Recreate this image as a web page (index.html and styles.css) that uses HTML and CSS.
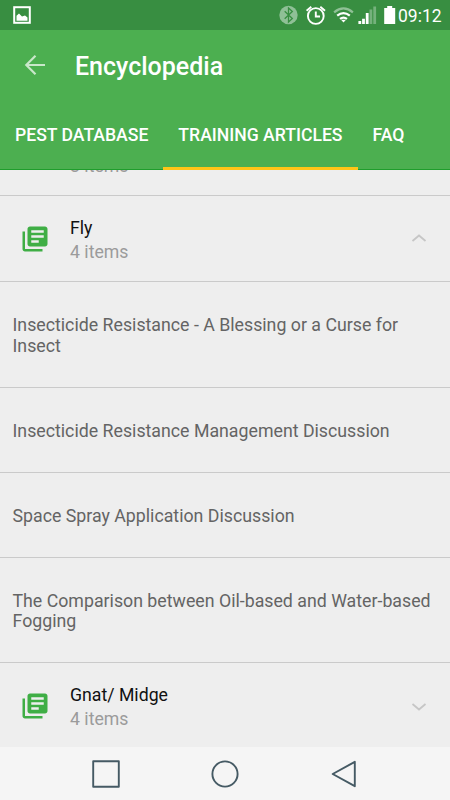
FILE: index.html
```
<!DOCTYPE html>
<html lang="en">
<head>
    <meta charset="UTF-8">
    <meta name="viewport" content="width=device-width, initial-scale=1.0">
    <title>Encyclopedia</title>
    <link rel="stylesheet" href="styles.css">
</head>
<body>
    <!-- Shared icons -->
    <svg width="0" height="0" class="sprite">
        <symbol id="icon-library" viewBox="0 0 24 24">
            <path d="M4 6H2v14c0 1.1.9 2 2 2h14v-2H4V6zm16-4H8c-1.1 0-2 .9-2 2v12c0 1.1.9 2 2 2h12c1.1 0 2-.9 2-2V4c0-1.1-.9-2-2-2zm-1 9H9V9h10v2zm-4 4H9v-2h6v2zm4-8H9V5h10v2z"/>
        </symbol>
        <symbol id="icon-up" viewBox="0 0 16 10">
            <path d="M1.5 7L8 1.5L14.5 7"/>
        </symbol>
        <symbol id="icon-down" viewBox="0 0 16 10">
            <path d="M1.5 3L8 8.5L14.5 3"/>
        </symbol>
    </svg>

    <div class="screen">
        <div class="status-bar">
            <svg class="picture" width="18" height="18" viewBox="0 0 18 18">
                <rect x="1.2" y="1.2" width="15.6" height="15.6" fill="none" stroke="#fff" stroke-width="2"/>
                <path d="M3.5 14.8V9.8L6 7.5L9 10.5L12 9.5L14.5 11.5V14.8z" fill="#fff"/>
            </svg>
            <div class="indicators">
                <svg width="165" height="30" viewBox="0 0 165 30">
                    <circle cx="10.5" cy="15" r="9.2" fill="#8fc096"/>
                    <path d="M6.7 11.3L14.3 18.6L10.5 22V8L14.3 11.4L6.7 18.7" fill="none" stroke="#388e41" stroke-width="1.3"/>
                    <g fill="none" stroke="#fff" stroke-width="1.9">
                        <circle cx="37.8" cy="16" r="7.9"/>
                        <path d="M37.8 11.5V16.5H42M28.6 10.8L33.3 6.8M42.3 6.8L47 10.8"/>
                    </g>
                    <g fill="none" stroke-width="2.2">
                        <path d="M56.1 12.3Q65.5 4.5 74.9 12.3" stroke="#8fc096"/>
                        <path d="M59.2 15.7Q65.5 10.5 71.8 15.7" stroke="#fff"/>
                        <path d="M62 18.9Q65.5 16.2 69 18.9" stroke="#fff"/>
                    </g>
                    <path d="M63 19.8H68L65.5 22.4z" fill="#fff"/>
                    <path d="M80.4 21h2.8v3h-2.8zM84.1 18.8h2.8V24h-2.8zM87.8 13h2.8v11h-2.8z" fill="#fff"/>
                    <path d="M91.5 9.5h2.8v14.500h-2.8zM95.3 6.500h2.8V24h-2.8z" fill="#75b17c"/>
                    <path d="M106.2 8h3V6h5v2h3v16h-11z" fill="#fff"/>
                </svg>
                <span class="clock">09:12</span>
            </div>
        </div>

        <header class="app-bar">
            <div class="title-row">
                <svg class="back" width="22" height="22" viewBox="0 0 22 22">
                    <path d="M21 11H2.5M11.5 1.8L2.3 11L11.5 20.2"/>
                </svg>
                <h1>Encyclopedia</h1>
            </div>
            <nav class="tabs">
                <a class="tab">PEST DATABASE</a>
                <a class="tab active">TRAINING ARTICLES</a>
                <a class="tab">FAQ</a>
            </nav>
        </header>

        <main class="list">
            <div class="group scrolled">
                <div class="group-text">
                    <div class="name">&nbsp;</div>
                    <div class="count">3 items</div>
                </div>
            </div>
            <div class="group">
                <svg class="library"><use href="#icon-library"/></svg>
                <div class="group-text">
                    <div class="name">Fly</div>
                    <div class="count">4 items</div>
                </div>
                <svg class="chevron"><use href="#icon-up"/></svg>
            </div>
            <div class="article two-lines">Insecticide Resistance - A Blessing or a Curse for Insect</div>
            <div class="article">Insecticide Resistance Management Discussion</div>
            <div class="article">Space Spray Application Discussion</div>
            <div class="article two-lines">The Comparison between Oil-based and Water-based Fogging</div>
            <div class="group">
                <svg class="library"><use href="#icon-library"/></svg>
                <div class="group-text">
                    <div class="name">Gnat/ Midge</div>
                    <div class="count">4 items</div>
                </div>
                <svg class="chevron"><use href="#icon-down"/></svg>
            </div>
        </main>

        <footer class="nav-bar">
            <svg width="28" height="28" viewBox="0 0 28 28"><rect x="1.2" y="1.2" width="25.6" height="25.6"/></svg>
            <svg width="28" height="28" viewBox="0 0 28 28"><circle cx="14" cy="14" r="12.6"/></svg>
            <svg width="28" height="28" viewBox="0 0 28 28"><path d="M24.8 1.8V26.2L2.7 14z"/></svg>
        </footer>
    </div>
</body>
</html>
```
FILE: styles.css
```
* {
    box-sizing: border-box;
}

body {
    margin: 0;
    font-family: Roboto, sans-serif;
    background-color: #eeeeee;
}

svg {
    display: block;
    flex: none;
}

.sprite {
    position: absolute;
}

.screen {
    display: flex;
    flex-direction: column;
    width: 450px;
    height: 800px;
    overflow: hidden;
}

.status-bar {
    display: flex;
    justify-content: space-between;
    align-items: center;
    height: 30px;
    flex: none;
    padding: 0 8px 0 13px;
    background-color: #388e41;
}

.indicators {
    display: flex;
    align-items: center;
    width: 164px;
}

.indicators svg {
    width: 165px;
    margin-right: -45px;
}

.clock {
    color: #fff;
    font-size: 17.5px;
    line-height: 30px;
    margin-top: 2px;
    white-space: nowrap;
}

.app-bar {
    display: flex;
    flex-direction: column;
    height: 140px;
    flex: none;
    background-color: #4caf50;
    border-bottom: 1px solid #1f9d2c;
    color: #fff;
}

.title-row {
    display: flex;
    flex: none;
    align-items: center;
    height: 70px;
    padding-left: 24px;
}

.back {
    fill: none;
    stroke: #c9e7ca;
    stroke-width: 2.2;
}

.title-row h1 {
    margin: 3px 0 0 29px;
    font-size: 25px;
    font-weight: 500;
    line-height: 30px;
}

.tabs {
    display: flex;
    flex: none;
    height: 70px;
}

.tab {
    height: 70px;
    padding: 0 15px;
    font-size: 17.6px;
    font-weight: 500;
    line-height: 71px;
    white-space: nowrap;
}

.tab.active {
    border-bottom: 3px solid #ffc517;
}

.list {
    flex: 1;
    overflow: hidden;
}

.group {
    display: flex;
    align-items: center;
    height: 86px;
    padding: 0 22px;
    border-bottom: 1px solid #cacaca;
}

.group.scrolled {
    margin-top: -60px;
    padding-left: 70px;
}

.library {
    width: 30px;
    height: 30px;
    margin-left: -2px;
    fill: #3fae45;
}

.group-text {
    flex: 1;
    margin-left: 20px;
    padding-top: 2px;
    font-size: 17.7px;
    line-height: 24px;
}

.group.scrolled .group-text {
    margin-left: 0;
}

.name {
    color: #111;
}

.count {
    color: #9b9b9b;
}

.chevron {
    width: 16px;
    height: 10px;
    margin-right: 1px;
    fill: none;
    stroke: #c6c6c6;
    stroke-width: 1.8;
}

.article {
    display: flex;
    align-items: center;
    height: 85px;
    padding: 3px 12px 0 12.5px;
    border-bottom: 1px solid #cacaca;
    color: #646464;
    font-size: 17.75px;
    line-height: 20.5px;
}

.article.two-lines {
    height: 105.5px;
}

.nav-bar {
    display: flex;
    justify-content: center;
    align-items: center;
    gap: 91px;
    height: 53px;
    flex: none;
    background-color: #f5f5f5;
}

.nav-bar svg {
    fill: none;
    stroke: #455a64;
    stroke-width: 1.9;
    stroke-linejoin: round;
}
```
